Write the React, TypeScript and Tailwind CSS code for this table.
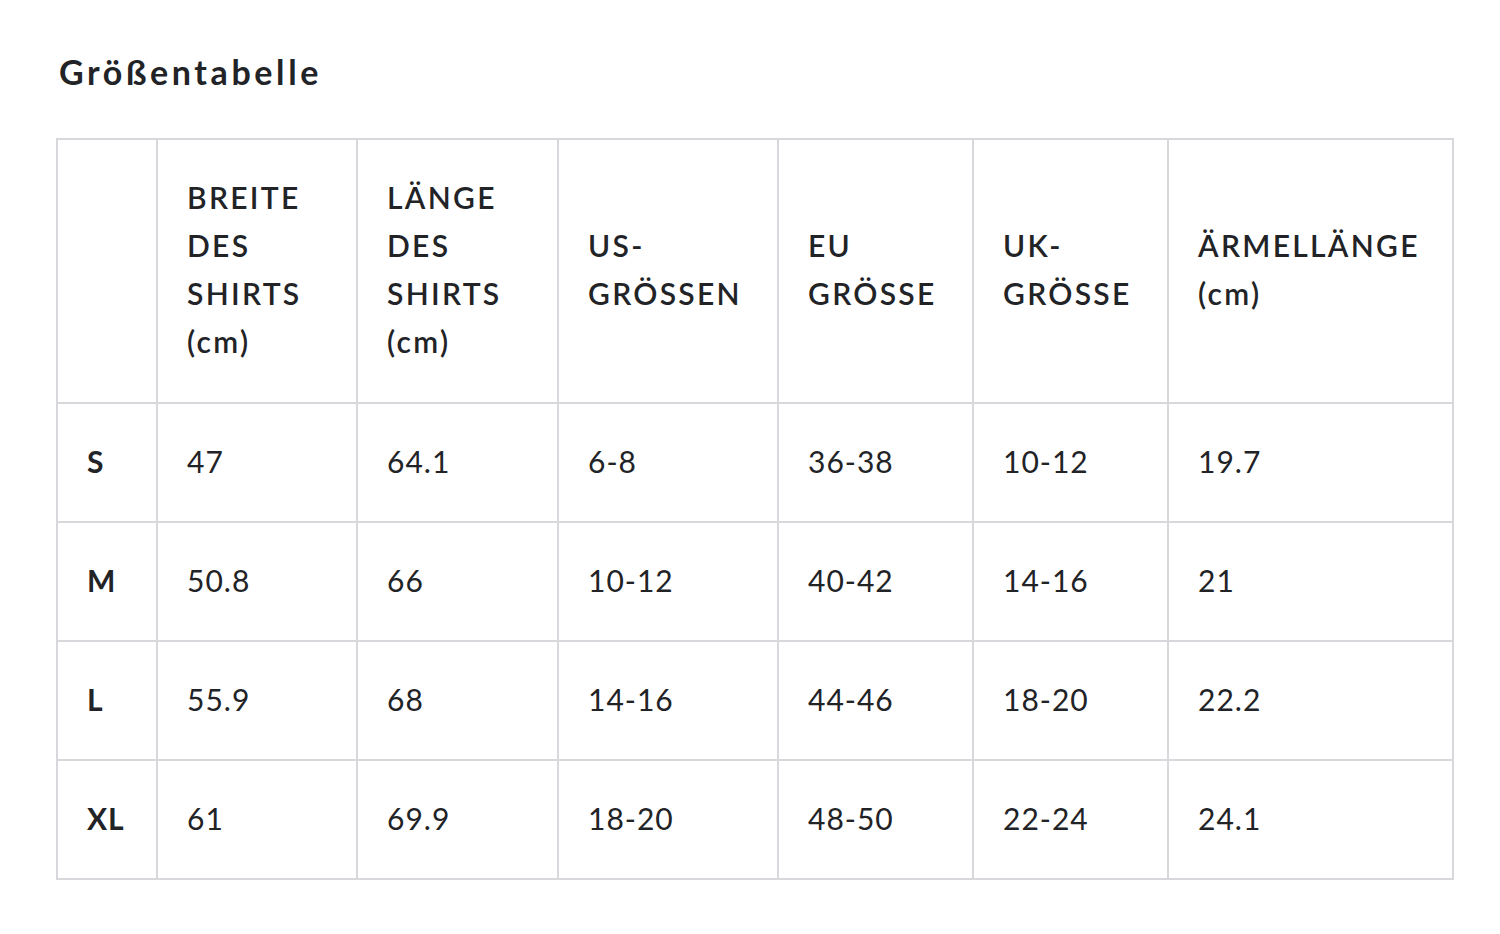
import React from "react";

const headers: string[][] = [
  [],
  ["BREITE", "DES", "SHIRTS", "(cm)"],
  ["LÄNGE", "DES", "SHIRTS", "(cm)"],
  ["US-", "GRÖSSEN"],
  ["EU", "GRÖSSE"],
  ["UK-", "GRÖSSE"],
  ["ÄRMELLÄNGE", "(cm)"],
];

const rows: string[][] = [
  ["S", "47", "64.1", "6-8", "36-38", "10-12", "19.7"],
  ["M", "50.8", "66", "10-12", "40-42", "14-16", "21"],
  ["L", "55.9", "68", "14-16", "44-46", "18-20", "22.2"],
  ["XL", "61", "69.9", "18-20", "48-50", "22-24", "24.1"],
];

const widths = [100, 200, 201, 220, 195, 195, 285];

export default function App() {
  return (
    <div
      className="min-h-screen bg-white text-[#222326] pl-[56px] pr-[47px] pt-[44px]"
      style={{ fontFamily: "Lato, 'Noto Sans', sans-serif" }}
    >
      <h2 className="text-[34px] leading-[56px] font-bold tracking-[3.6px] pl-[3px]">
        Größentabelle
      </h2>
      <table className="mt-[38px] table-fixed border-collapse border-2 border-[#d8d8dc] w-[1396px]">
        <colgroup>
          {widths.map((w, i) => (
            <col key={i} style={{ width: w }} />
          ))}
        </colgroup>
        <thead>
          <tr>
            {headers.map((h, i) => (
              <th
                key={i}
                className="border-2 border-[#d8d8dc] px-[29px] pt-[33px] pb-[37px] text-left align-middle font-semibold text-[30px] leading-[48px] tracking-[2.3px]"
              >
                {h.map((line, j) => (
                  <div key={j}>{line}</div>
                ))}
              </th>
            ))}
          </tr>
        </thead>
        <tbody>
          {rows.map((r, i) => (
            <tr key={i}>
              {r.map((c, j) => (
                <td
                  key={j}
                  className={
                    "border-2 border-[#d8d8dc] px-[29px] pt-[33px] pb-[36px] align-middle text-[30px] leading-[48px] tracking-[1px] " +
                    (j === 0 ? "font-bold" : "font-normal")
                  }
                >
                  {c}
                </td>
              ))}
            </tr>
          ))}
        </tbody>
      </table>
    </div>
  );
}
